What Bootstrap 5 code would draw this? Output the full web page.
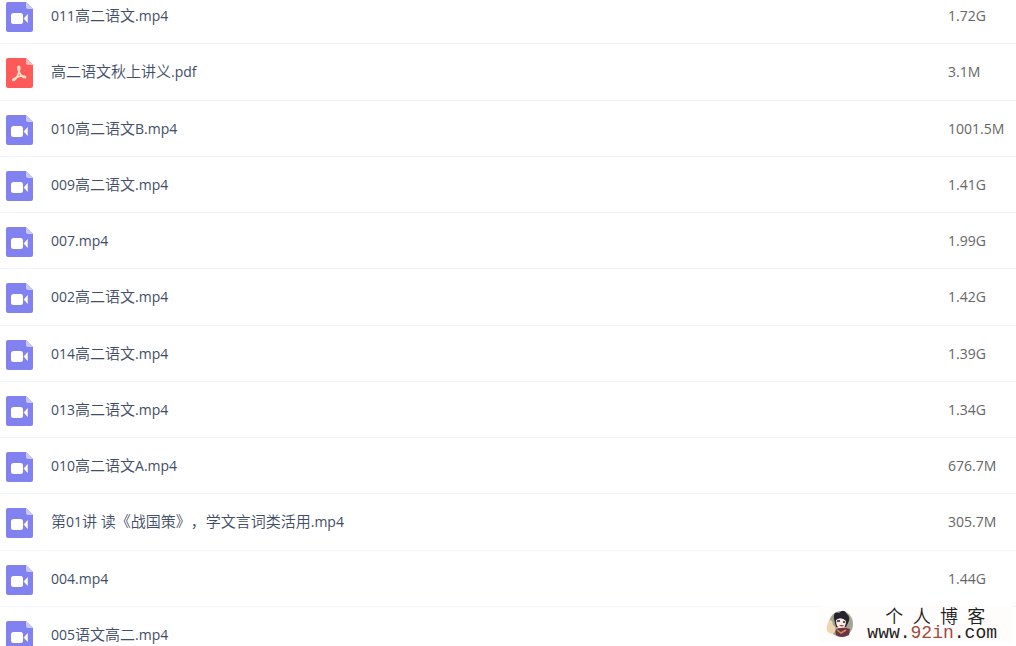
<!DOCTYPE html>
<html lang="zh-CN">
<head>
<meta charset="utf-8">
<meta name="viewport" content="width=device-width, initial-scale=1">
<title>高二语文</title>
<link href="https://cdn.jsdelivr.net/npm/bootstrap@5.3.0/dist/css/bootstrap.min.css" rel="stylesheet">
<style>
body { font-family: "Open Sans", "Noto Sans CJK SC", sans-serif; font-size: 14px; line-height: 24px; color: #424e67; }
.file-view { height: 100vh; }
.file-list { --bs-table-color: #424e67; --bs-table-bg: transparent; border-color: #eef5fd; }
.file-list td { height: 56px; padding: 0; border-bottom: 1px solid #f0f5fc; }
.file-list tr:nth-child(4n+2) td { height: 57px; }
.file-list tr:first-child td { height: 43px; padding-bottom: 11px; }
.file-list .icon-cell { width: 51px; padding: 2px 0 0 6px; }
.file-list .size-cell { width: 68px; color: #666; }
.file-icon { display: block; width: 27px; height: 30px; }
.zh { font-family: "Noto Sans CJK SC", sans-serif; font-size: 15px; font-weight: 350; line-height: 20px; font-kerning: none; text-spacing-trim: space-all; }
.watermark { right: 3px; bottom: 3px; width: 195px; height: 38px; background: #fffdfb; color: #222; }
.blog-title { width: 100px; margin-left: 18px; font-family: "Noto Sans CJK SC", sans-serif; font-size: 18px; font-weight: 350; line-height: 18px; text-align-last: justify; }
.blog-url { font-family: "Liberation Mono", monospace; font-size: 18px; line-height: 18px; }
.blog-url b { font-weight: 400; color: #a04a40; }
</style>
<script src="https://cdn.jsdelivr.net/npm/bootstrap@5.3.0/dist/js/bootstrap.bundle.min.js"></script>
</head>
<body>
<svg width="0" height="0" class="position-absolute" aria-hidden="true">
<symbol id="video" viewBox="0 0 27 30">
<path d="M2 0H20L27 7V28Q27 30 25 30H2Q0 30 0 28V2Q0 0 2 0Z" fill="#8182ef"/>
<path d="M20 0L27 7H22Q20 7 20 5Z" fill="#c8c8fa"/>
<rect x="5" y="11" width="12" height="11" rx="2.5" fill="#fff"/>
<path d="M18 16.500L21.500 12.500V20.500Z" fill="#fff" stroke="#fff" stroke-width=".5"/>
</symbol>
<symbol id="pdf" viewBox="0 0 27 30">
<path d="M2 0H20L27 7V28Q27 30 25 30H2Q0 30 0 28V2Q0 0 2 0Z" fill="#ff5a5a"/>
<path d="M20 0L27 7H22Q20 7 20 5Z" fill="#ffb9b5"/>
<path d="M12.500 8.500C14.500 8 13.500 12 13 14C11.500 18.500 9 23 7 22.500C5.500 21.500 10 19.500 13 18.500C16 17.500 20 18 19.500 19.500C18 20.500 14.500 17 13 14C12 11.500 11.500 9 12.500 8.500Z" fill="none" stroke="#ffe0c8" stroke-width="1.700"/>
</symbol>
</svg>
<main class="file-view position-relative overflow-hidden">
<table class="file-list table align-middle mb-0">
<tbody>
<tr><td class="icon-cell"><svg class="file-icon"><use href="#video"/></svg></td><td>011<span class="zh">高二语文</span>.mp4</td><td class="size-cell">1.72G</td></tr>
<tr><td class="icon-cell"><svg class="file-icon"><use href="#pdf"/></svg></td><td><span class="zh">高二语文秋上讲义</span>.pdf</td><td class="size-cell">3.1M</td></tr>
<tr><td class="icon-cell"><svg class="file-icon"><use href="#video"/></svg></td><td>010<span class="zh">高二语文</span>B.mp4</td><td class="size-cell">1001.5M</td></tr>
<tr><td class="icon-cell"><svg class="file-icon"><use href="#video"/></svg></td><td>009<span class="zh">高二语文</span>.mp4</td><td class="size-cell">1.41G</td></tr>
<tr><td class="icon-cell"><svg class="file-icon"><use href="#video"/></svg></td><td>007.mp4</td><td class="size-cell">1.99G</td></tr>
<tr><td class="icon-cell"><svg class="file-icon"><use href="#video"/></svg></td><td>002<span class="zh">高二语文</span>.mp4</td><td class="size-cell">1.42G</td></tr>
<tr><td class="icon-cell"><svg class="file-icon"><use href="#video"/></svg></td><td>014<span class="zh">高二语文</span>.mp4</td><td class="size-cell">1.39G</td></tr>
<tr><td class="icon-cell"><svg class="file-icon"><use href="#video"/></svg></td><td>013<span class="zh">高二语文</span>.mp4</td><td class="size-cell">1.34G</td></tr>
<tr><td class="icon-cell"><svg class="file-icon"><use href="#video"/></svg></td><td>010<span class="zh">高二语文</span>A.mp4</td><td class="size-cell">676.7M</td></tr>
<tr><td class="icon-cell"><svg class="file-icon"><use href="#video"/></svg></td><td><span class="zh">第</span>01<span class="zh">讲</span> <span class="zh">读《战国策》，学文言词类活用</span>.mp4</td><td class="size-cell">305.7M</td></tr>
<tr><td class="icon-cell"><svg class="file-icon"><use href="#video"/></svg></td><td>004.mp4</td><td class="size-cell">1.44G</td></tr>
<tr><td class="icon-cell"><svg class="file-icon"><use href="#video"/></svg></td><td>005<span class="zh">语文高二</span>.mp4</td><td class="size-cell"></td></tr>
</tbody>
</table>
<div class="watermark position-absolute d-flex align-items-center justify-content-between ps-2 pe-3">
<svg width="28" height="30" viewBox="0 0 28 30" class="flex-shrink-0" aria-hidden="true">
<ellipse cx="15" cy="15" rx="12" ry="13" fill="#a6a391"/>
<path d="M8 10Q7 2 13 4Q18 -1 21 5Q25 8 22 14L20 18H10Z" fill="#25232c"/>
<path d="M10 11Q15 7 20 12Q20 19 15 20Q10 19 10 11Z" fill="#fbe9e3"/>
<path d="M11 12H14M17 13H19" stroke="#222" stroke-width="1.500"/>
<path d="M13 16Q16 19 18 16Z" fill="#b34545"/>
<path d="M9 21Q15 17 24 20L23 26Q16 30 10 26Z" fill="#693445"/>
<path d="M11 21L15 24L20 21" stroke="#d48a4c" fill="none" stroke-width="1.500"/>
<path d="M2 14Q3 10 6 12L7 16Q11 18 9 23Q5 27 1 22Q0 18 2 14Z" fill="#efd5ad"/>
</svg>
<div class="text-nowrap">
<div class="blog-title">个人博客</div>
<div class="blog-url">www.<b>92in</b>.com</div>
</div>
</div>
</main>
</body>
</html>
